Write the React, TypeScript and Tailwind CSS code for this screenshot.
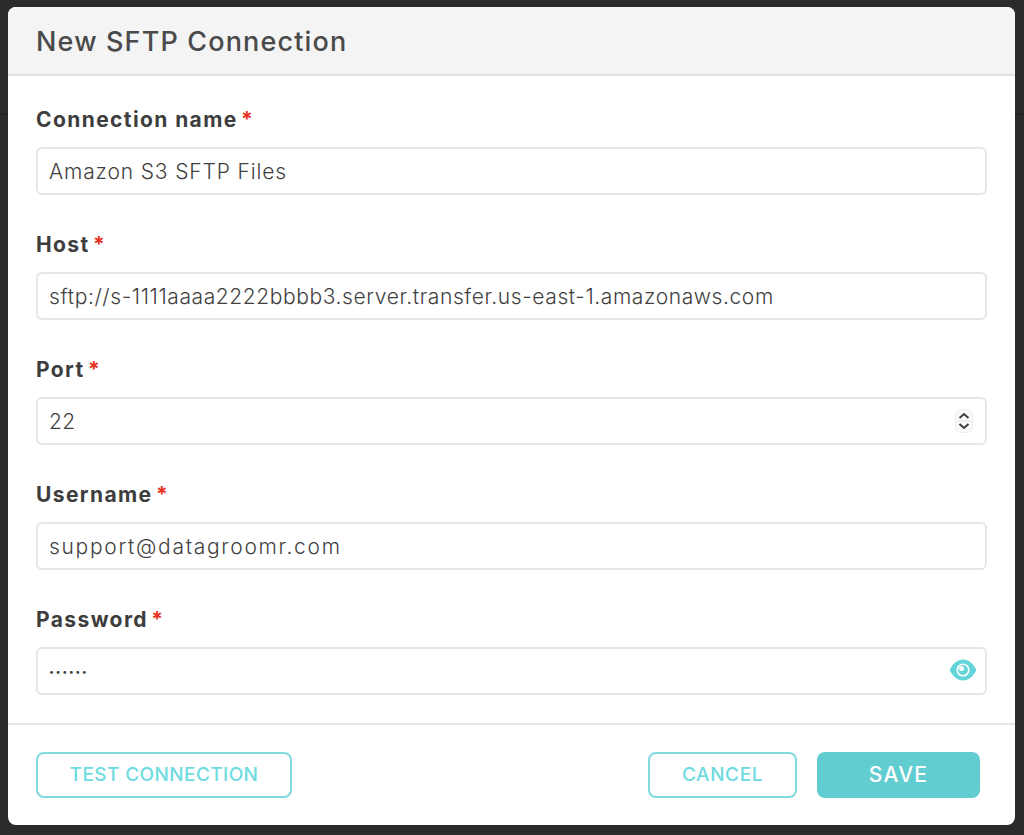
import React from 'react';

const fieldClass =
  'h-12 w-full rounded-md border-2 border-[#e6e6e6] bg-white pr-3 pl-[11px] text-[#3f3f3f] outline-none';

function Field({
  label,
  value,
  inputClass,
  children,
}: {
  label: string;
  value: string;
  inputClass: string;
  children?: React.ReactNode;
}) {
  return (
    <div className="flex flex-col">
      <label className="h-[41px] text-[21px] leading-[28px] font-bold tracking-[1.4px] text-[#3d3d3d]">
        {label} <span className="-ml-[3px] text-[#e8301c]">*</span>
      </label>
      <div className="relative">
        <input className={`${fieldClass} ${inputClass}`} defaultValue={value} readOnly />
        {children}
      </div>
    </div>
  );
}

function Stepper() {
  return (
    <svg className="absolute top-[12px] right-[14px]" width="18" height="24" viewBox="0 0 18 24" fill="none">
      <rect x="0.5" y="0.5" width="17" height="23" rx="6" fill="#fafafa" stroke="#ececec" />
      <path d="M1 12H17" stroke="#e2e2e2" />
      <path d="M4.5 9L9 5L13.5 9" stroke="#3d3d3d" strokeWidth="2" />
      <path d="M4.5 15L9 19L13.5 15" stroke="#3d3d3d" strokeWidth="2" />
    </svg>
  );
}

function Eye() {
  return (
    <svg className="absolute top-[12px] right-[10px]" width="28" height="22" viewBox="0 0 28 22" fill="none">
      <path d="M0.5 11C4 4.5 8.5 0.5 14 0.5S24 4.5 27.5 11C24 17.5 19.5 21.5 14 21.5S4 17.5 0.5 11Z" fill="#62d5da" />
      <circle cx="14" cy="11" r="6.6" fill="white" />
      <circle cx="14" cy="11" r="4.9" fill="#62d5da" />
      <circle cx="12.6" cy="9.6" r="2.5" fill="white" />
    </svg>
  );
}

export default function App() {
  return (
    <div className="relative h-[835px] w-[1024px] overflow-hidden bg-[#2b2b2b] pt-[7px] pl-[8px] font-['Inter','Liberation_Sans',sans-serif]">
      <div className="absolute top-[114px] left-0 h-px w-full bg-[#1f1f1f]" />
      <div className="relative flex h-[818px] w-[1007px] flex-col overflow-hidden rounded-lg bg-white">
        <div className="flex h-[69px] shrink-0 items-center border-b-2 border-[#e2e2e2] bg-[#f4f4f4] px-7 pt-[3px]">
          <h1 className="text-[27px] font-medium tracking-[1.15px] text-[#4a4a4a]">New SFTP Connection</h1>
        </div>

        <div className="flex flex-col gap-[36px] px-7 pt-[30px]">
          <Field label="Connection name" value="Amazon S3 SFTP Files" inputClass="text-[21px] font-light tracking-[0.85px]" />
          <Field
            label="Host"
            value="sftp://s-1111aaaa2222bbbb3.server.transfer.us-east-1.amazonaws.com"
            inputClass="text-[21px] font-light tracking-[0.6px]"
          />
          <Field label="Port" value="22" inputClass="text-[21px] font-light tracking-[0.4px]">
            <Stepper />
          </Field>
          <Field label="Username" value="support@datagroomr.com" inputClass="text-[21px] font-light tracking-[1.7px]" />
          <Field label="Password" value="••••••" inputClass="text-[9px] font-normal tracking-[1.5px]">
            <Eye />
          </Field>
        </div>

        <div className="mt-[28px] flex flex-1 items-start justify-between border-t-2 border-[#e6e6e6] pt-[27px] pr-[35px] pl-7">
          <button className="h-[46px] w-[256px] rounded-lg border-2 border-[#7fdbe0] text-[19px] font-medium tracking-[0.4px] text-[#6ddbe0]">
            TEST CONNECTION
          </button>
          <div className="flex gap-[20px]">
            <button className="h-[46px] w-[149px] rounded-lg border-2 border-[#7fdbe0] text-[19px] font-medium tracking-[0.6px] text-[#6ddbe0]">
              CANCEL
            </button>
            <button className="h-[46px] w-[163px] rounded-lg bg-[#62cdd1] text-[21px] font-medium tracking-[1.3px] text-white">
              SAVE
            </button>
          </div>
        </div>
      </div>
    </div>
  );
}
